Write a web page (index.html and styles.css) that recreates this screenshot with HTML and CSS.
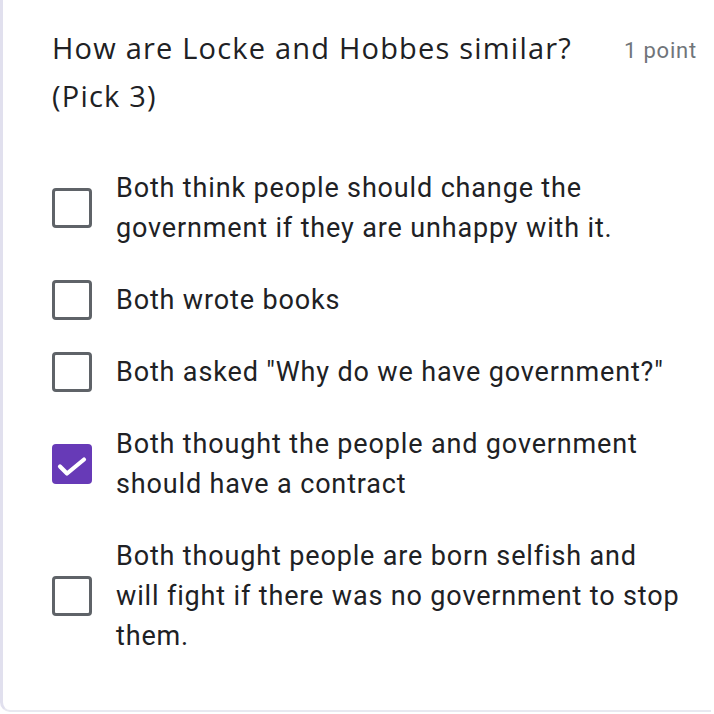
FILE: index.html
```html
<!DOCTYPE html>
<html>
<head>
<meta charset="utf-8">
<link rel="stylesheet" href="styles.css">
</head>
<body>
<div class="card">
  <div class="header">
    <div class="title">How are Locke and Hobbes similar? (Pick 3)</div>
    <div class="points">1 point</div>
  </div>
  <div class="options">
    <div class="option">
      <span class="box"></span>
      <span class="label">Both think people should change the government if they are unhappy with it.</span>
    </div>
    <div class="option">
      <span class="box"></span>
      <span class="label">Both wrote books</span>
    </div>
    <div class="option">
      <span class="box"></span>
      <span class="label">Both asked "Why do we have government?"</span>
    </div>
    <div class="option">
      <span class="box checked"><svg viewBox="0 0 40 40" width="40" height="40"><path d="M8 22.5l7 7L32 15.5" fill="none" stroke="#fff" stroke-width="4.2" stroke-linecap="round" stroke-linejoin="round"/></svg></span>
      <span class="label">Both thought the people and government should have a contract</span>
    </div>
    <div class="option">
      <span class="box"></span>
      <span class="label">Both thought people are born selfish and will fight if there was no government to stop them.</span>
    </div>
  </div>
</div>
</body>
</html>
```
FILE: styles.css
```css
html, body {
  margin: 0;
  padding: 0;
  background: #fff;
}
.card {
  width: 711px;
  height: 712px;
  border-left: 3px solid #e1e0ee;
  border-bottom: 2px solid #e8e8f0;
  border-bottom-left-radius: 10px;
  box-sizing: border-box;
  padding: 24px 24px 0 49px;
  font-family: Roboto, "Liberation Sans", sans-serif;
}
.header {
  display: flex;
  justify-content: space-between;
  align-items: flex-start;
  margin-right: -10px;
}
.title {
  width: 545px;
  font-family: "Open Sans", Roboto, sans-serif;
  font-size: 29px;
  line-height: 48px;
  letter-spacing: 1.2px;
  color: #202124;
}
.points {
  font-size: 22px;
  line-height: 54px;
  letter-spacing: 0.8px;
  color: #70757a;
}
.options {
  display: flex;
  flex-direction: column;
  gap: 32px;
  margin-top: 48px;
}
.option {
  display: flex;
  align-items: center;
  gap: 24px;
}
.box {
  flex: none;
  width: 40px;
  height: 40px;
  box-sizing: border-box;
  border: 3px solid #5f6368;
  border-radius: 4px;
  display: flex;
  align-items: center;
  justify-content: center;
}
.box.checked {
  background: #673ab7;
  border: 0;
}
.label {
  font-size: 27px;
  line-height: 40px;
  color: #202124;
  letter-spacing: 0.85px;
}
```
